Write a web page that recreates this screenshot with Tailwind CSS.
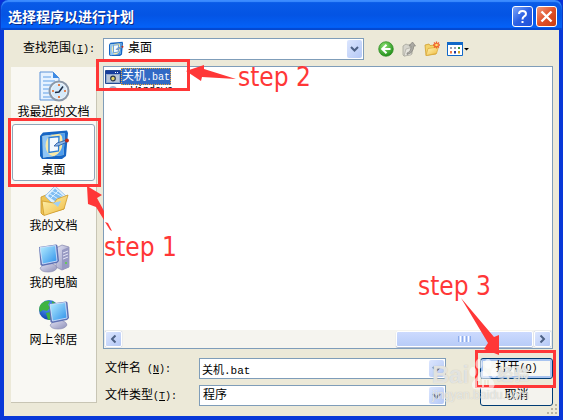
<!DOCTYPE html>
<html lang="zh-CN">
<head>
<meta charset="utf-8">
<meta name="viewport" content="width=device-width, initial-scale=1">
<title>选择程序以进行计划</title>
<script src="https://cdn.jsdelivr.net/npm/@tailwindcss/browser@4"></script>
</head>
<body class="bg-[#0831d9] font-['Liberation_Mono','Noto_Sans_CJK_SC',monospace] text-xs leading-4 text-black">
<svg class="absolute size-0" aria-hidden="true">
  <defs>
    <linearGradient id="blue" x1="0" y1="0" x2="1" y2="1"><stop offset="0" stop-color="#b9efff"/><stop offset="1" stop-color="#2b8fea"/></linearGradient>
    <linearGradient id="gold" x1="0" y1="0" x2="1" y2="1"><stop offset="0" stop-color="#fff6b8"/><stop offset="1" stop-color="#efb93c"/></linearGradient>
    <linearGradient id="grey" x1="0" y1="0" x2="1" y2="1"><stop offset="0" stop-color="#e4e4f4"/><stop offset="1" stop-color="#8d8fb8"/></linearGradient>
    <radialGradient id="green" cx=".4" cy=".3" r=".7"><stop offset="0" stop-color="#8be070"/><stop offset="1" stop-color="#23901c"/></radialGradient>
    <radialGradient id="globe" cx=".4" cy=".3" r=".7"><stop offset="0" stop-color="#5aa8ff"/><stop offset="1" stop-color="#0b3fae"/></radialGradient>
    <symbol id="desktop" viewBox="0 0 32 32">
      <path d="M2 7 5 3.500 29 1.500 30 4 28 27 24 30 4 30 2 27Z" fill="#1766c4"/>
      <path d="M4.500 7 27 4 25.500 26 5 28.500Z" fill="#f7e9a8"/>
      <path d="M4.500 7 15 5.500Q7 9 7.500 17T15 27.300L5 28.500Z" fill="#8fc6f7"/>
      <path d="M27 4 25.500 26 16 27.200Q24 24 24.500 14T20 5Z" fill="#4d9df0"/>
      <path d="M11 8.500 21 7.500 20.500 22 11 23.500Z" fill="#f4faff" stroke="#2b7fd6" stroke-width="1.300"/>
      <path d="M16 17 19 14 27 11.500 28 13.500 20 17Z" fill="#8bb7e8" stroke="#25549c" stroke-width=".8"/>
      <circle cx="29" cy="11.500" r="1.900" fill="#c22a14"/>
    </symbol>
    <symbol id="chevron" viewBox="0 0 9 6"><path d="M1 1 4.500 4.500 8 1" fill="none" stroke="#4d6185" stroke-width="2"/></symbol>
    <symbol id="monitor" viewBox="0 0 22 30">
      <path d="M2 25Q5 21 9 21L13 20Q19 22 19 25 17 29 10 29 3 29 2 25Z" fill="url(#grey)" stroke="#8688ae" stroke-width=".6"/>
      <path d="M1 4 18 1.500Q19.500 1.500 19.500 3L21 18 19 20 4 23 2.500 22Z" fill="#5c70b4"/>
      <path d="M2 4.500 17.500 2.500 19 18 4.500 21Z" fill="url(#blue)" stroke="#dce8ff" stroke-width=".8"/>
    </symbol>
  </defs>
</svg>

<div class="relative flex min-h-screen flex-col rounded-t-lg border-x-4 border-b-4 border-[#0838d8] bg-[#0855e6]">
  <header class="-mx-1 flex h-[30px] items-center gap-[3px] rounded-t-lg border-x border-[#0a3cc8] bg-linear-to-b from-[#0a5ce8] via-[#0454e4] to-[#0464fc] pr-[5px] pl-[7px] shadow-[inset_0_2px_1px_#3c8cff,inset_0_-2px_1px_#0448d0]">
    <h1 class="flex-1 pt-[2px] font-['Noto_Sans_CJK_SC',sans-serif] text-sm leading-5 font-bold text-white [text-shadow:1px_1px_#0a2a88]">选择程序以进行计划</h1>
    <button aria-label="帮助" class="mt-[3px] size-[21px] rounded-[3px] border border-white bg-linear-to-br from-[#7ea4f8] via-[#2c60e4] to-[#1c50d8]">
      <svg viewBox="0 0 19 19" fill="none" stroke="#fff" stroke-width="2"><path d="M6 7Q6 4 9.500 4T13 7Q13 8.500 11 9.500 9.500 10.500 9.500 12.500M9.500 14V16"/></svg>
    </button>
    <button aria-label="关闭" class="mt-[3px] size-[21px] rounded-[3px] border border-white bg-linear-to-br from-[#f09878] via-[#e05028] to-[#c83c10]">
      <svg viewBox="0 0 19 19" fill="none" stroke="#fff" stroke-width="2.400"><path d="M4.500 4.500 14.500 14.500M14.500 4.500 4.500 14.500"/></svg>
    </button>
  </header>

  <main class="flex flex-1 flex-col bg-[#ece9d8] pr-[6px] pl-[7px]">
    <div class="flex h-9 items-center pt-[2px]">
      <label for="place" class="w-[92px] pl-3 whitespace-nowrap">查找范围<span class="text-[10px]">(<u>I</u>):</span></label>
      <div class="relative w-[261px]">
        <select id="place" class="block h-[22px] w-full appearance-none border border-[#7f9db9] bg-white pl-6"><option>桌面</option></select>
        <svg class="pointer-events-none absolute top-[3px] left-[5px] size-4"><use href="#desktop"/></svg>
        <span class="pointer-events-none absolute top-[2px] right-[2px] flex h-[18px] w-[15px] items-center justify-center rounded-xs bg-linear-to-br from-[#dce6fe] to-[#b4c8f6]"><svg class="h-[6px] w-[9px]"><use href="#chevron"/></svg></span>
      </div>
      <nav class="flex items-center gap-[7px] pl-[14px]">
        <button aria-label="后退"><svg class="size-4" viewBox="0 0 16 16"><circle cx="8" cy="8" r="7.300" fill="url(#green)" stroke="#2c8a20" stroke-width=".7"/><path d="M8.500 3.800 4.200 8 8.500 12.200M4.500 8H12.500" fill="none" stroke="#fff" stroke-width="2"/></svg></button>
        <button aria-label="向上一级"><svg class="size-4" viewBox="0 0 16 16"><path d="M2 5 5 3 7 4 11 3 11 13 3 15 2 14Z" fill="#d5d4cc" stroke="#a5a49b" stroke-width=".8"/><path d="M5 8 12 6 10 14 3 15Z" fill="#e5e4dd" stroke="#aaa99f" stroke-width=".7"/><path d="M6 12Q10 11 10 5H8L11.500 1 14.500 5H12.800Q12.500 12 6 13.500Z" fill="#aaa9a3" stroke="#85847e" stroke-width=".7"/></svg></button>
        <button aria-label="新建文件夹"><svg class="size-4" viewBox="0 0 16 16"><path d="M1 4 5 3 6 4.500 12 4 12 13 2 14.500Z" fill="#f3d36b" stroke="#d1a02f" stroke-width=".8"/><path d="M4 7.500 14.500 6 12.500 12.500 2 14.500Z" fill="url(#gold)" stroke="#d9a837" stroke-width=".7"/><path d="M12.500.5V7.500M9 4H16M10 1.500 15 6.500M15 1.500 10 6.500" stroke="#f0602c" stroke-width="1.300"/><circle cx="12.500" cy="4" r="1.300" fill="#ffe06a"/></svg></button>
        <button aria-label="查看"><svg class="h-4 w-[23px]" viewBox="0 0 23 16"><path d="M.5 1.500H15.500V14.500H.5Z" fill="#fff" stroke="#1168c8"/><path d="M0 1H16V4H0Z" fill="#1168c8"/><path d="M3 6H5V8H3ZM7 6H9V8H7Z" fill="#9aa0b4"/><path d="M11 6H13V8H11Z" fill="#3c9440"/><path d="M3 10H5V12.500H3Z" fill="#f07848"/><path d="M7 10H9V12.500H7Z" fill="#1c38a0"/><path d="M11 10H13V12.500H11Z" fill="#d0a020"/><path d="M17 7H22L19.500 9.500Z" fill="#000"/></svg></button>
      </nav>
    </div>

    <div class="flex flex-1 gap-[6px]">
      <aside class="mt-px mb-[13px] w-[86px] border-r border-b border-[#c8c5b4] bg-[#f9f8f3]">
        <ul class="font-['Noto_Sans_CJK_SC',sans-serif]">
          <li><a href="#recent" class="flex h-[57px] flex-col items-center pt-1">
            <svg class="size-8 shrink-0" viewBox="0 0 32 32"><path d="M2 1H15L21 7V29H2Z" fill="#e6f2ff" stroke="#5b92d8"/><path d="M15 1V7H21Z" fill="#3c8ae4"/><path d="M5 6H13M5 10H17M5 14H14M5 18H12M5 22H11M5 26H13" stroke="#8dbcf0" stroke-width="1.500"/><circle cx="21" cy="20" r="9.500" fill="#edf4fa" stroke="#8b98a8" stroke-width="2"/><circle cx="21" cy="20" r="7.500" fill="#d6eafa"/><path d="M21 13V15M21 25V27M14 20H16M26 20H28" stroke="#e8641c" stroke-width="1.600"/><path d="M17 21.500 21 21 25 15.500" fill="none" stroke="#1c2c44" stroke-width="1.500"/></svg>
            我最近的文档</a></li>
          <li class="px-px"><a href="#desktop-place" class="flex h-[57px] flex-col items-center rounded-[3px] border border-[#8fa6b8] bg-white pt-1">
            <svg class="size-8 shrink-0"><use href="#desktop"/></svg>
            桌面</a></li>
          <li><a href="#documents" class="flex h-[57px] flex-col items-center pt-1">
            <svg class="size-8 shrink-0" viewBox="0 0 32 32"><path d="M3 12 8 10 11 12 25 9 26 24 5 30 3 28Z" fill="#edc456" stroke="#c99426" stroke-width=".8"/><path d="M17 1 28 11 19 23 7 11Z" fill="#dff0ff" stroke="#8dbbe6" stroke-width=".8"/><path d="M17 3.500 25 11 18 17 10 11Z" fill="#80bdf2"/><path d="M12 9 22 15M14 6 25 12M20 6 11 15" stroke="#d8eeff"/><path d="M4 16 16 18 19 14 30 10 26 24 6 30.500Z" fill="url(#gold)" stroke="#cf9a2b" stroke-width=".8"/><path d="M15 18 20 22 23 16Z" fill="#9fd0f5"/></svg>
            我的文档</a></li>
          <li><a href="#computer" class="flex h-[57px] flex-col items-center pt-1">
            <svg class="size-8 shrink-0" viewBox="0 0 32 32"><path d="M18 6 24 3 31 5V25L24 28 18 25Z" fill="url(#grey)" stroke="#8284ac" stroke-width=".7"/><path d="M24 8V28L31 25V5Z" fill="#9799c2"/><path d="M25 11 30 9M25 14 30 12M25 17 30 15" stroke="#e6e6f6"/><circle cx="28" cy="21" r="1" fill="#56d838"/><use href="#monitor" x="0" y="1" width="22" height="30"/></svg>
            我的电脑</a></li>
          <li><a href="#network" class="flex h-[57px] flex-col items-center pt-1">
            <svg class="size-8 shrink-0" viewBox="0 0 32 32"><circle cx="11" cy="11" r="10" fill="url(#globe)"/><path d="M3 5Q7 1 12 2L10 6 13 8 9 12 5 11 2 13Q0 9 3 5ZM8 14 13 13 14 20 10 21ZM14 2 19 5 17 9 14 7Z" fill="#3fb342"/><use href="#monitor" x="10" y="1" width="22" height="30"/></svg>
            网上邻居</a></li>
        </ul>
      </aside>

      <section class="flex flex-1 flex-col">
        <div class="flex flex-1 flex-col border border-[#7f9db9] bg-white">
          <ul class="flex-1 px-px pt-px">
            <li class="flex h-[17px] items-center">
              <svg class="size-4" viewBox="0 0 16 16"><path d="M.5 1.500H15.500V14.500H.5Z" fill="#8fa9cf" stroke="#234a91"/><path d="M1 2H15V5H1Z" fill="#173e9c"/><path d="M10 3.500H11M12 3.500H13" stroke="#fff"/><path d="M2 6H14V13H2Z" fill="#b9c6d8"/><circle cx="8" cy="9.500" r="2.300" fill="#e5d46a" stroke="#28384c" stroke-width="1.200"/></svg>
              <span class="h-[17px] border border-dotted border-[#e8a23c] bg-[#316ac5] text-white">关机<span class="text-[10px]">.bat</span></span>
            </li>
            <li class="flex h-[3px] gap-2 overflow-hidden pt-px pl-1" aria-hidden="true"><span class="h-2 w-2 rounded-full bg-[#9fb4cf]"></span><span class="text-[10px] leading-[9px]">&nbsp;Windows</span></li>
          </ul>
          <div class="flex h-[18px] gap-px bg-[#f5f4ef] p-px">
            <button aria-label="向左滚动" class="flex w-[17px] items-center justify-center rounded-xs border border-white bg-linear-to-br from-[#dce6fe] to-[#b4c8f6] shadow-[0_0_1px_#7c98d8]"><svg class="h-[6px] w-[9px] rotate-90"><use href="#chevron"/></svg></button>
            <div class="flex flex-1 justify-end">
              <div class="flex w-1/3 items-center justify-center gap-px rounded-xs border border-white bg-linear-to-b from-[#ccdafe] to-[#b8ccf8] shadow-[0_1px_1px_#a4b4d0]"><i class="h-[6px] w-px bg-[#8cacec]"></i><i class="h-[6px] w-px bg-white"></i><i class="h-[6px] w-px bg-[#8cacec]"></i><i class="h-[6px] w-px bg-white"></i><i class="h-[6px] w-px bg-[#8cacec]"></i><i class="h-[6px] w-px bg-white"></i><i class="h-[6px] w-px bg-[#8cacec]"></i></div>
            </div>
            <button aria-label="向右滚动" class="flex w-[17px] items-center justify-center rounded-xs border border-white bg-linear-to-br from-[#dce6fe] to-[#b4c8f6] shadow-[0_0_1px_#7c98d8]"><svg class="h-[6px] w-[9px] -rotate-90"><use href="#chevron"/></svg></button>
          </div>
        </div>

        <form class="grid grid-cols-[96px_1fr_73px] items-center gap-y-[6px] pt-[9px] pb-[10px]">
          <label for="name" class="pt-[2px] pl-[2px]">文件名<span class="text-[10px]"> (<u>N</u>):</span></label>
          <div class="relative mr-[34px]">
            <input id="name" value="关机.bat" class="block h-[21px] w-full border border-[#7f9db9] bg-white pl-[2px] text-[11px]">
            <button type="button" aria-label="文件名列表" class="absolute top-[2px] right-[2px] flex h-[17px] w-[15px] items-center justify-center rounded-xs bg-linear-to-br from-[#dce6fe] to-[#b4c8f6]"><svg class="h-[6px] w-[9px]"><use href="#chevron"/></svg></button>
          </div>
          <button type="button" class="h-[21px] rounded-[3px] border border-[#003c74] bg-[#f8f8f4] shadow-[inset_0_0_0_2px_#a8c4f0]">打开<span class="text-[10px]">(<u>O</u>)</span></button>
          <label for="type" class="pt-[2px] pl-[2px]">文件类型<span class="text-[10px]">(<u>T</u>):</span></label>
          <div class="relative mr-[34px]">
            <select id="type" class="block h-[21px] w-full appearance-none border border-[#7f9db9] bg-white pl-[3px]"><option>程序</option></select>
            <span class="pointer-events-none absolute top-[2px] right-[2px] flex h-[17px] w-[15px] items-center justify-center rounded-xs bg-linear-to-br from-[#dce6fe] to-[#b4c8f6]"><svg class="h-[6px] w-[9px]"><use href="#chevron"/></svg></span>
          </div>
          <button type="button" class="h-[21px] rounded-[3px] border border-[#003c74] bg-[#f4f3ee]">取消</button>
        </form>
      </section>
    </div>
  </main>

  <svg class="absolute right-0 bottom-0 size-3" viewBox="0 0 12 12" fill="#b8b4a2"><path d="M8 0H10V2H8ZM4 4H6V6H4ZM8 4H10V6H8ZM0 8H2V10H0ZM4 8H6V10H4ZM8 8H10V10H8Z"/></svg>

  <div class="pointer-events-none absolute inset-y-0 -inset-x-1 font-['DejaVu_Sans_Condensed','DejaVu_Sans',sans-serif] text-[26px] leading-8 text-[#ff3737]">
    <div class="absolute top-[118px] left-2 h-[69px] w-[93px] border-3 border-[#ff3737]"></div>
    <div class="absolute top-[59px] left-24 h-8 w-[94px] border-3 border-[#ff3737]"></div>
    <div class="absolute top-[350px] left-[475px] h-[38px] w-[81px] border-3 border-[#ff3737]"></div>
    <svg class="absolute top-0 left-0 h-[420px] w-[563px]" viewBox="0 0 563 420" fill="#ff3737">
      <path d="M87 186 102 195 97 198 104 211V220L96 207 88 204ZM105 222 108 223 112 231 110 230Z"/>
      <path d="M186 71 204 65V69L236 79 202 77 201 81Z"/>
      <path d="M461 298 494 337 499 335V355L484 349 488 343Z"/>
    </svg>
    <span class="absolute top-[231px] left-[104px] whitespace-nowrap">step 1</span>
    <span class="absolute top-[61px] left-[238px] whitespace-nowrap">step 2</span>
    <span class="absolute top-[270px] left-[418px] whitespace-nowrap">step 3</span>

    <div class="absolute top-[359px] left-[432px] font-['Liberation_Sans','Noto_Sans_CJK_SC',sans-serif] text-white/60 [text-shadow:0_0_1px_#b8b8b0]">
      <div class="flex items-center text-2xl leading-8 font-bold"><span>Bai</span>
        <svg class="h-8 w-7 shrink-0" viewBox="0 0 28 32" fill="currentColor"><ellipse cx="10" cy="5" rx="3.500" ry="5"/><ellipse cx="19" cy="5" rx="3.500" ry="5"/><ellipse cx="4" cy="13" rx="3.500" ry="5"/><ellipse cx="25" cy="14" rx="3" ry="5"/><path fill-rule="evenodd" d="M14 12Q18 12 20 18 27 23 25 28 23 32 14 30 4 32 3 27 2 23 8 18 10 12 14 12ZM15 21V28H20V21H18V26H17V21ZM8 22V28H13V19H11V22ZM10 24H11V26H10Z"/></svg>
        <span class="text-base whitespace-nowrap">经验</span></div>
      <div class="-mt-1 text-xs leading-4">jingyan.baidu.com</div>
    </div>
  </div>
</div>
</body>
</html>
